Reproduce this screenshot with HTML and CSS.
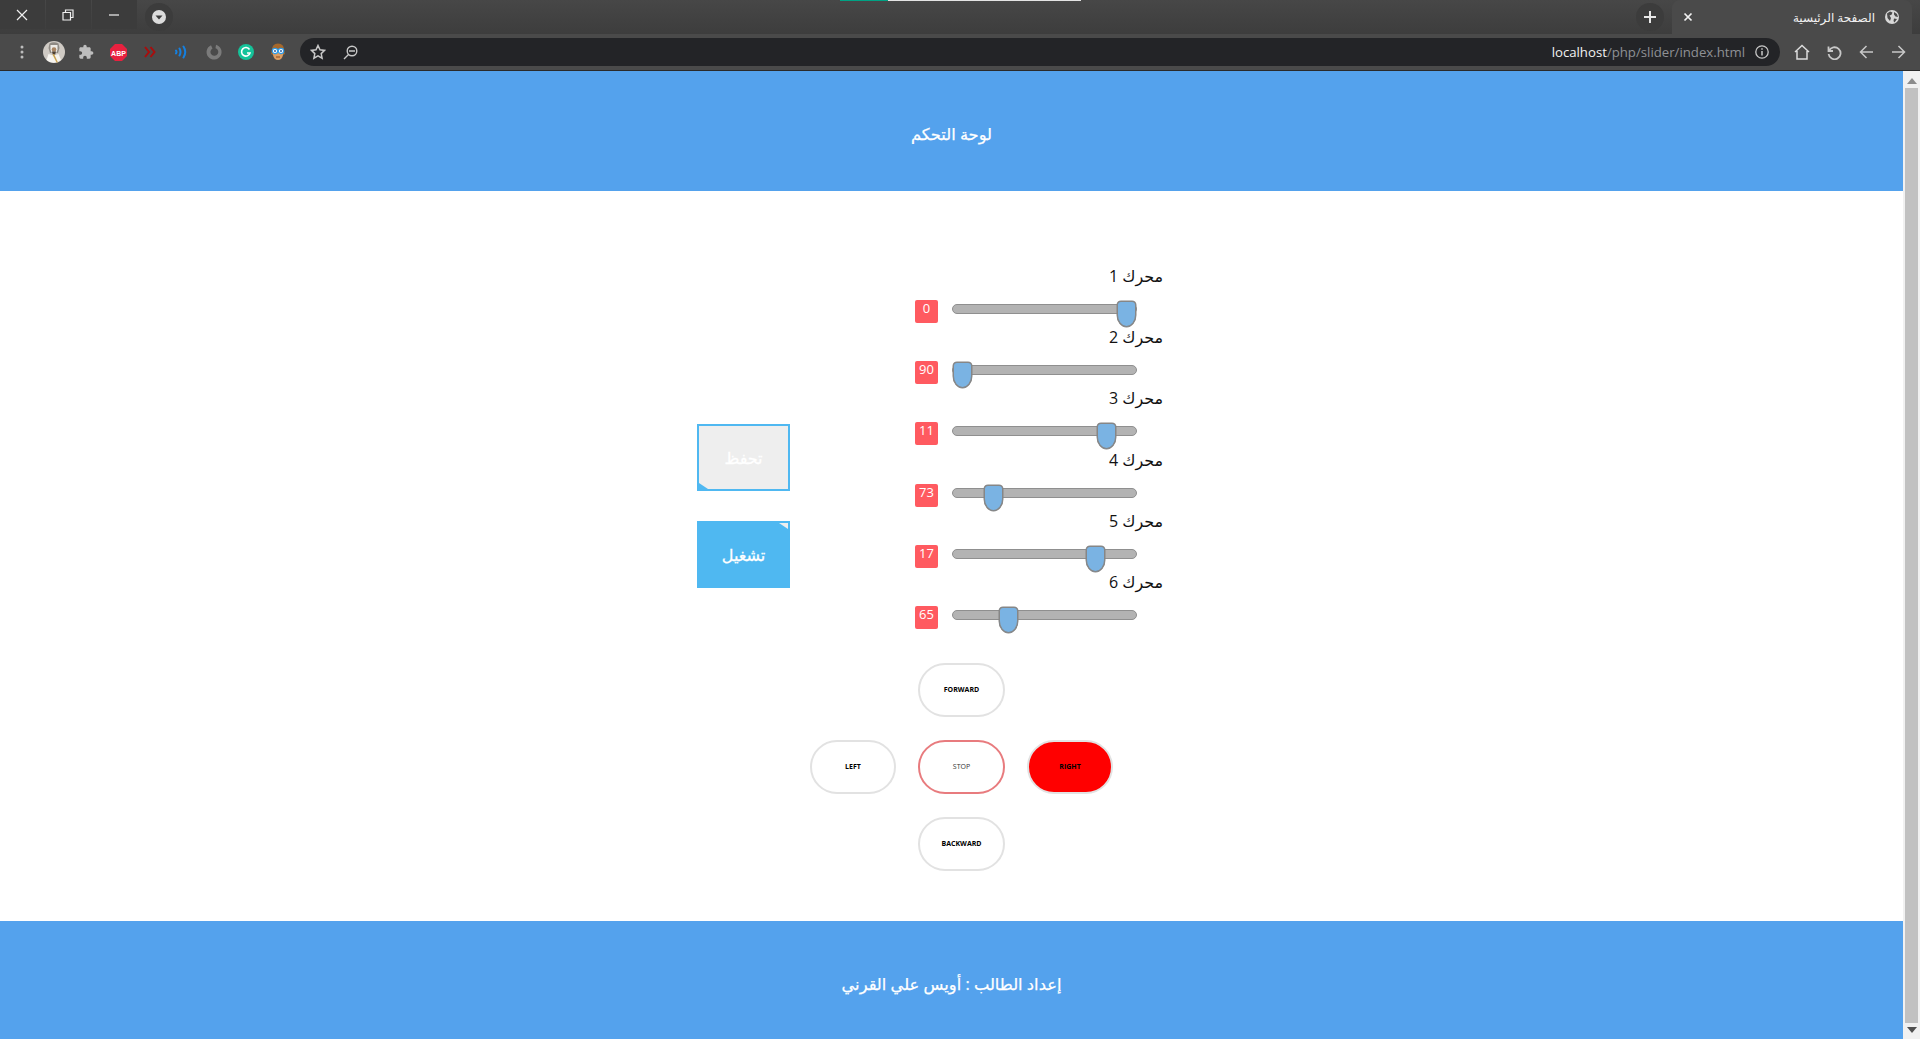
FILE: index.html
```html
<!DOCTYPE html>
<html lang="ar">
<head>
<meta charset="utf-8">
<title>الصفحة الرئيسية</title>
<link rel="stylesheet" href="styles.css">
</head>
<body>
<div class="browser">
  <div class="titlebar">
    <div class="progress"><span class="progress-a"></span><span class="progress-b"></span></div>
    <div class="winctl">
      <span class="winbtn"><svg width="12" height="12" viewBox="0 0 12 12"><path d="M1 1l10 10M11 1L1 11" class="ico-w"/></svg></span>
      <span class="winbtn"><svg width="12" height="12" viewBox="0 0 12 12"><path d="M1 3.500h7.500V11H1zM3.500 3.500V1H11v7.500H8.500" class="ico-w"/></svg></span>
      <span class="winbtn"><svg width="12" height="12" viewBox="0 0 12 12"><path d="M1 6h10" class="ico-w"/></svg></span>
    </div>
    <span class="tabsearch"><svg width="14" height="14" viewBox="0 0 14 14"><circle cx="7" cy="7" r="7" fill="#dcdcdc"/><path d="M3.500 5.500h7L7 9.500z" fill="#3c3c3c"/></svg></span>
    <span class="titlespace"></span>
    <span class="newtab"><svg width="14" height="14" viewBox="0 0 14 14"><path d="M7 1v12M1 7h12" stroke="#e8e8e8" stroke-width="2" fill="none"/></svg></span>
    <div class="tab">
      <svg class="tabclose" width="10" height="10" viewBox="0 0 10 10"><path d="M1.500 1.500l7 7M8.500 1.500l-7 7" stroke="#f2f2f2" stroke-width="1.700" fill="none"/></svg>
      <span class="tabtitle">الصفحة الرئيسية</span>
      <svg width="14" height="14" viewBox="0 0 14 14"><circle cx="7" cy="7" r="7" fill="#d8d8d8"/><path d="M2 3.500l3-2 2.500 1-1 2.300-2 .7 1.500 2.500-1 3L2.500 8zM9 2l3 2 1 3-2.500-.5-1.500-2zM9 8.500l3 .5-2.500 3.500-1-1.500z" fill="#4b4b4b"/></svg>
    </div>
  </div>
  <div class="toolbar">
    <span class="cell"><svg width="4" height="14" viewBox="0 0 4 14"><circle cx="2" cy="2" r="1.500" fill="#bdbdbd"/><circle cx="2" cy="7" r="1.500" fill="#bdbdbd"/><circle cx="2" cy="12" r="1.500" fill="#bdbdbd"/></svg></span>
    <span class="cell"><svg width="22" height="22" viewBox="0 0 22 22"><circle cx="11" cy="11" r="11" fill="#cfcac4"/><path d="M6.500 2.500Q11 0 15.500 2.500l1 4.500L15 12H7L5.500 7z" fill="#8f8a84"/><path d="M7.500 4h7v4.500l-1 3h-5l-1-3z" fill="#eeebe6"/><circle cx="11" cy="8.500" r="2.300" fill="#a98563"/><path d="M9 10.500h4l-.8 3h-2.400z" fill="#4e4033"/><path d="M3.500 19l2-6 5 1.500 5-1.500 2.500 6a11 11 0 0 1-14.500 0z" fill="#f6f4ef"/><path d="M9.500 13.500l4 8h1.500l-4-8.500z" fill="#c9a24f"/></svg></span>
    <span class="cell"><svg width="16" height="16" viewBox="0 0 24 24"><path fill="#bdbdbd" d="M20.500 11H19V7c0-1.100-.9-2-2-2h-4V3.500C13 2.120 11.880 1 10.500 1S8 2.120 8 3.500V5H4c-1.100 0-1.990.9-1.990 2v3.800H3.500c1.490 0 2.700 1.210 2.700 2.700s-1.210 2.700-2.700 2.700H2V20c0 1.100.9 2 2 2h3.800v-1.500c0-1.490 1.210-2.700 2.700-2.700 1.490 0 2.700 1.210 2.700 2.700V22H17c1.100 0 2-.9 2-2v-4h1.500c1.380 0 2.500-1.120 2.500-2.500S21.880 11 20.500 11z"/></svg></span>
    <span class="cell"><svg width="17" height="17" viewBox="0 0 17 17"><path d="M5 0h7l5 5v7l-5 5H5l-5-5V5z" fill="#e8213f"/><text x="8.500" y="11.500" class="abp">ABP</text></svg></span>
    <span class="cell"><svg width="12" height="12" viewBox="0 0 12 12"><path d="M1 1l4 5-4 5M6.500 1l4 5-4 5" stroke="#a80d0d" stroke-width="2" fill="none"/></svg></span>
    <span class="cell"><svg width="14" height="14" viewBox="0 0 14 14"><path d="M1 5.500q1 1.500 0 3M4.500 3.500q2 3.500 0 7M8.500 1.500q3.500 5.500 0 11" stroke="#1580e0" stroke-width="2" fill="none" stroke-linecap="round"/></svg></span>
    <span class="cell"><svg width="16" height="16" viewBox="0 0 16 16"><path d="M10 .8A7.500 7.500 0 1 1 5 1.200l1.500 3.300a3.900 3.900 0 1 0 3-.3z" fill="#7b7b7b"/></svg></span>
    <span class="cell"><svg width="16" height="16" viewBox="0 0 16 16"><circle cx="8" cy="8" r="8" fill="#15c39a"/><path d="M11.500 5.500A4.300 4.300 0 1 0 12 9H9" stroke="#fff" stroke-width="1.600" fill="none"/></svg></span>
    <span class="cell"><svg width="16" height="18" viewBox="0 0 16 18"><path d="M2 7Q2 .5 8 .5T14 7l1 4-2 1H3l-2-1z" fill="#a5682c"/><path d="M3 9h10v3q-1 5-5 5t-5-5z" fill="#dc9d62"/><circle cx="5" cy="8" r="2.700" fill="#fff" stroke="#2f9be8" stroke-width="1.200"/><circle cx="11" cy="8" r="2.700" fill="#fff" stroke="#2f9be8" stroke-width="1.200"/><circle cx="5" cy="8" r="1" fill="#2f5f9f"/><circle cx="11" cy="8" r="1" fill="#2f5f9f"/><path d="M6 14h4" stroke="#8a4a20"/></svg></span>
    <div class="addressbar">
      <span class="cell"><svg width="16" height="16" viewBox="0 0 16 16"><path d="M8 1.500l2 4.300 4.600.6-3.400 3.200.9 4.600L8 11.900l-4.100 2.300.9-4.600L1.400 6.400 6 5.800z" stroke="#c8c8c8" stroke-width="1.500" fill="none"/></svg></span>
      <span class="cell"><svg width="15" height="15" viewBox="0 0 15 15"><circle cx="9" cy="6" r="4.800" stroke="#c8c8c8" stroke-width="1.400" fill="none"/><path d="M6 6h6M5.500 9.500L1 14" stroke="#c8c8c8" stroke-width="1.400" fill="none"/></svg></span>
      <span class="url"><span class="url-host">localhost</span>/php/slider/index.html</span>
      <svg class="info" width="14" height="14" viewBox="0 0 14 14"><circle cx="7" cy="7" r="6.200" stroke="#c8c8c8" stroke-width="1.300" fill="none"/><path d="M7 6v4.500M7 3.300v1.500" stroke="#c8c8c8" stroke-width="1.500"/></svg>
    </div>
    <span class="cell"><svg width="16" height="16" viewBox="0 0 16 16"><path d="M1 8l7-6.500L15 8M3 7v8h10V7" stroke="#dcdcdc" stroke-width="1.500" fill="none"/></svg></span>
    <span class="cell"><svg width="15" height="15" viewBox="0 0 15 15"><path d="M1.500 1.500v4.500h4.500M2 6a6 6 0 1 1 -.4 3" stroke="#c8c8c8" stroke-width="1.800" fill="none"/></svg></span>
    <span class="cell"><svg width="15" height="14" viewBox="0 0 15 14"><path d="M14 7H1.500M7.500 1l-6 6 6 6" stroke="#c8c8c8" stroke-width="1.500" fill="none"/></svg></span>
    <span class="cell"><svg width="15" height="14" viewBox="0 0 15 14"><path d="M1 7h12.500M7.500 1l6 6-6 6" stroke="#c8c8c8" stroke-width="1.500" fill="none"/></svg></span>
  </div>
</div>

<div class="viewport">
  <div class="page">
    <header class="band band-top">لوحة التحكم</header>
    <main class="content">
      <section class="panel">
        <div class="actions">
          <button class="action action-save" type="button">تحفظ</button>
          <button class="action action-run" type="button">تشغيل</button>
        </div>
        <div class="motors">
          <div class="motor">
            <label class="motor-label">محرك 1</label>
            <div class="motor-control"><span class="badge">0</span><input class="range" type="range" dir="rtl" min="0" max="90" value="0"></div>
          </div>
          <div class="motor">
            <label class="motor-label">محرك 2</label>
            <div class="motor-control"><span class="badge">90</span><input class="range" type="range" dir="rtl" min="0" max="90" value="90"></div>
          </div>
          <div class="motor">
            <label class="motor-label">محرك 3</label>
            <div class="motor-control"><span class="badge">11</span><input class="range" type="range" dir="rtl" min="0" max="90" value="11"></div>
          </div>
          <div class="motor">
            <label class="motor-label">محرك 4</label>
            <div class="motor-control"><span class="badge">73</span><input class="range" type="range" dir="rtl" min="0" max="90" value="73"></div>
          </div>
          <div class="motor">
            <label class="motor-label">محرك 5</label>
            <div class="motor-control"><span class="badge">17</span><input class="range" type="range" dir="rtl" min="0" max="90" value="17"></div>
          </div>
          <div class="motor">
            <label class="motor-label">محرك 6</label>
            <div class="motor-control"><span class="badge">65</span><input class="range" type="range" dir="rtl" min="0" max="90" value="65"></div>
          </div>
        </div>
      </section>
      <section class="pad">
        <button class="dir dir-forward" type="button">FORWARD</button>
        <button class="dir dir-left" type="button">LEFT</button>
        <button class="dir dir-stop" type="button">STOP</button>
        <button class="dir dir-right" type="button">RIGHT</button>
        <button class="dir dir-backward" type="button">BACKWARD</button>
      </section>
    </main>
    <footer class="band band-bottom">إعداد الطالب : أويس علي القرني</footer>
  </div>
  <div class="scrollbar">
    <svg class="arrow" width="10" height="6" viewBox="0 0 10 6"><path d="M5 0l5 6H0z" fill="#8c8c8c"/></svg>
    <span class="scrollthumb"></span>
    <svg class="arrow" width="10" height="6" viewBox="0 0 10 6"><path d="M0 0h10L5 6z" fill="#505050"/></svg>
  </div>
</div>
</body>
</html>
```
FILE: styles.css
```css
* { box-sizing: border-box; }
html, body { margin: 0; height: 100%; overflow: hidden; background: #fff; }
body {
  display: flex;
  flex-direction: column;
  font-family: "Open Sans", "DejaVu Sans", "Noto Sans", sans-serif;
  color: #111;
}

/* browser frame */
.browser { flex: none; height: 71px; background: #4a4a4a; border-bottom: 1px solid #2a2a2a; }
.titlebar {
  position: relative;
  height: 34px;
  display: flex;
  background: linear-gradient(#474747, #3d3d3d);
}
.progress { position: absolute; top: 0; left: 840px; height: 1px; display: flex; }
.progress-a { width: 48px; background: #00a284; }
.progress-b { width: 193px; background: #e4e4e4; }
.winctl { display: flex; height: 29px; gap: 1px; }
.winbtn { width: 45px; padding-right: 1px; display: flex; align-items: center; justify-content: center; background: #3c3c3c; }
.ico-w { stroke: #f0f0f0; stroke-width: 1.2; fill: none; }
.tabsearch {
  width: 28px; height: 28px; margin: 3px 0 0 8px;
  border-radius: 50%; background: #3c3c3c;
  display: flex; align-items: center; justify-content: center;
}
.titlespace { flex: 1; }
.newtab {
  width: 28px; height: 28px; margin: 3px 8px 0 0;
  border-radius: 50%; background: #3c3c3c;
  display: flex; align-items: center; justify-content: center;
}
.tab {
  width: 240px; height: 34px; margin-right: 8px; padding: 0 13px 0 11px;
  display: flex; align-items: center;
  background: #4a4a4a; border-radius: 8px 8px 0 0;
}
.tabtitle { flex: 1; text-align: right; padding-right: 10px; font-size: 12px; color: #f2f2f2; }
.toolbar { height: 36px; display: flex; align-items: center; padding: 0 6px; }
.cell { flex: none; width: 32px; height: 27px; display: flex; align-items: center; justify-content: center; }
.abp { font: bold 7px "Liberation Sans", sans-serif; fill: #fff; text-anchor: middle; }
.addressbar {
  flex: 1; height: 28px; margin: 0 6px 0 6px; padding: 0 11px 0 2px;
  display: flex; align-items: center;
  background: #232427; border-radius: 14px;
}
.url { flex: 1; text-align: right; font-size: 13.200px; color: #8f9195; direction: ltr; }
.url-host { color: #f2f2f2; }
.info { margin-left: 10px; }

/* page */
.viewport { flex: 1; min-height: 0; display: flex; }
.page { flex: 1; min-width: 0; overflow: hidden; display: flex; flex-direction: column; }
.band {
  flex: none; height: 120px;
  display: flex; align-items: center; justify-content: center;
  padding-top: 6px;
  background: #54a2ed; color: #fff;
  font-size: 16.300px;
  -webkit-text-stroke: .25px #fff;
}
.content {
  flex: none; height: 730px; padding-top: 71px;
  display: flex; flex-direction: column; align-items: center;
}
.panel { display: flex; gap: 125px; margin-right: 46px; }
.actions { display: flex; flex-direction: column; gap: 30px; padding-top: 162px; }
.action {
  position: relative;
  width: 93px; height: 67px; padding: 0;
  border: 2px solid #4fb8f1; border-radius: 0;
  font: 16px "Open Sans", "DejaVu Sans", sans-serif; color: #fff;
  -webkit-text-stroke: .3px #fff;
}
.action::after { content: ""; position: absolute; width: 0; height: 0; }
.action-save { background: #eee; }
.action-save::after {
  left: 0; bottom: 0;
  border-style: solid; border-width: 6px 0 0 9px;
  border-color: transparent transparent transparent #4fb8f1;
}
.action-run { background: #4fb8f1; }
.action-run::after {
  right: 0; top: 0;
  border-style: solid; border-width: 0 9px 6px 0;
  border-color: transparent #eee transparent transparent;
}
.motors { width: 245px; display: flex; flex-direction: column; }
.motor { height: 61.200px; display: flex; flex-direction: column; }
.motor-label {
  align-self: flex-end; width: 48px; height: 38px; padding-bottom: 10px;
  display: flex; align-items: center; justify-content: center; white-space: nowrap;
  font-size: 16px; color: #111;
}
.motor-control { display: flex; gap: 14px; }
.badge {
  flex: none; width: 23px; height: 23px; border-radius: 2px;
  background: #ff5a60; color: #fff;
  font-size: 13px; line-height: 16px; text-align: center;
}
.range {
  flex: none; width: 185px; height: 10px; margin: 4px 0 0;
  -webkit-appearance: none; appearance: none;
  background: transparent;
}
.range::-webkit-slider-runnable-track {
  height: 10px;
  background: #b3b3b3; border: 1px solid #8f8f8f; border-radius: 5px;
}
.range::-webkit-slider-thumb {
  -webkit-appearance: none; appearance: none;
  width: 19px; height: 26px; margin-top: -4px;
  background: #7ab3e3; border: 1px solid #868686;
  box-shadow: 0 0 0 .5px #868686;
  border-radius: 4px 4px 50% 50% / 4px 4px 12px 12px;
}
.pad {
  margin: 34px 0 0 20px;
  display: grid;
  grid-template-columns: 86px 87px 86px;
  grid-auto-rows: 54px;
  gap: 23px 22px;
}
.dir {
  padding: 0 0 2px; background: #fff;
  border: 2px solid #e2e2e2; border-radius: 27px;
  font: bold 7px "Open Sans", sans-serif; color: #000;
}
.dir-forward { grid-column: 2; grid-row: 1; }
.dir-left { grid-column: 1; grid-row: 2; }
.dir-stop { grid-column: 2; grid-row: 2; border-color: #e87b7e; font-weight: 400; color: #333; }
.dir-right { grid-column: 3; grid-row: 2; background: #ff0000; }
.dir-backward { grid-column: 2; grid-row: 3; }

/* scrollbar */
.scrollbar {
  flex: none; width: 17px; padding: 7px 2px 6px;
  display: flex; flex-direction: column; align-items: center; gap: 4px;
  background: #f1f1f1;
}
.arrow { flex: none; }
.scrollthumb { flex: 1; align-self: stretch; background: #c1c1c1; }
```
